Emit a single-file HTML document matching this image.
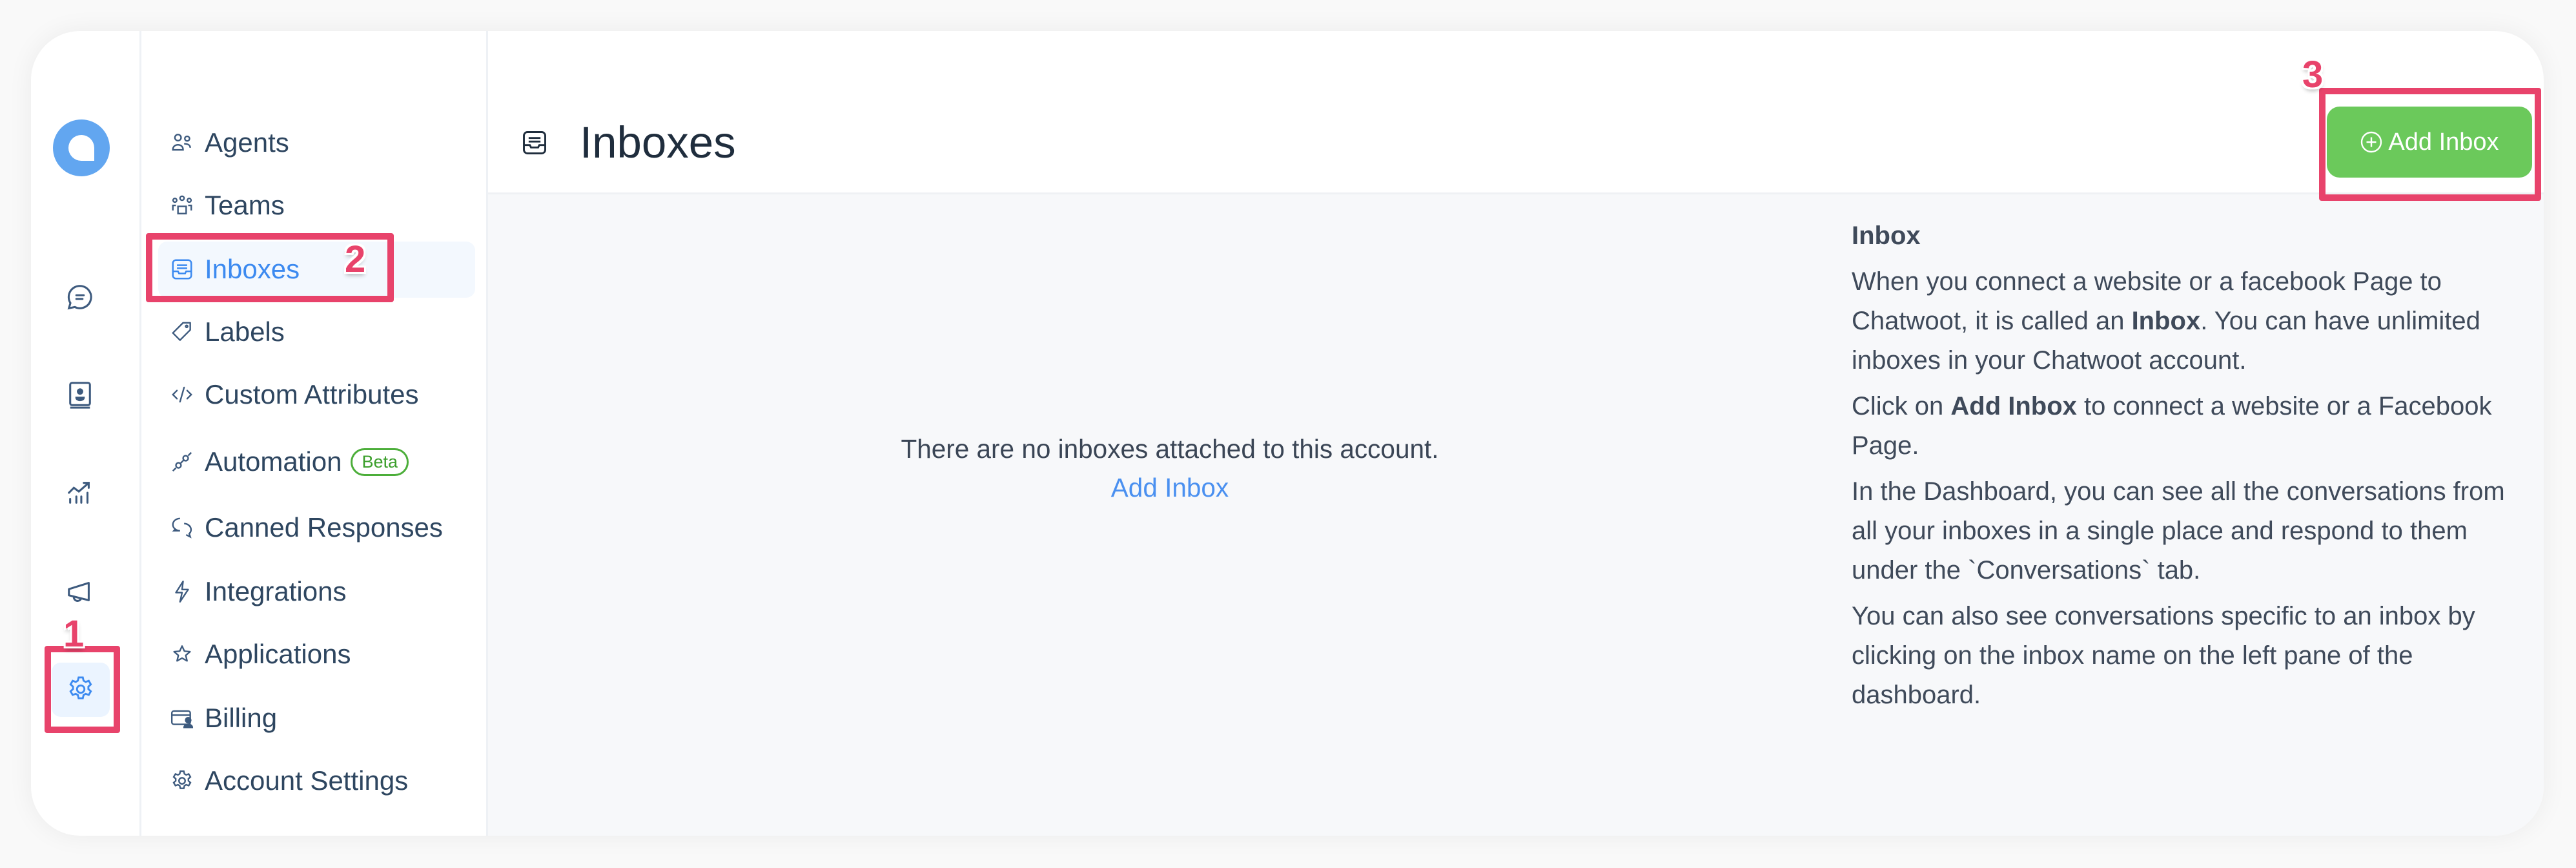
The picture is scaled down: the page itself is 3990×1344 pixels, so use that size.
<!DOCTYPE html>
<html><head><meta charset="utf-8"><style>
*{margin:0;padding:0;box-sizing:border-box}
body{width:3990px;height:1344px;background:#f9f9f9;font-family:"Liberation Sans",sans-serif;position:relative;overflow:hidden;color:#2e3e52}
.card{position:absolute;left:48px;top:48px;width:3892px;height:1246px;background:#fff;border-radius:76px;box-shadow:0 0 40px rgba(0,0,0,0.06);overflow:hidden}
.abs{position:absolute}
.nav{position:absolute;left:168px;top:0;width:540px;height:100%;border-left:3px solid #eef1f5;border-right:3px solid #eef1f5}
.item{position:absolute;left:44px;height:60px;display:flex;align-items:center;font-size:42px;color:#2e4660;white-space:nowrap}
.item svg{width:38px;height:38px;margin-right:16px;flex:none}
.main{position:absolute;left:708px;top:250px;right:0;bottom:0;background:#f7f8fa;border-top:3px solid #eff1f4}
.rbox{position:absolute;border:10px solid #e8436b;border-radius:4px}
.num{position:absolute;font-weight:bold;color:#e8436b;font-size:58px;text-shadow:0 0 4px #fff,3px 3px 0 #fff,-3px -3px 0 #fff,3px -3px 0 #fff,-3px 3px 0 #fff,0 5px 7px rgba(0,0,0,.3)}
.info{position:absolute;left:2820px;top:287px;font-size:40px;line-height:61px;color:#3f4a5a;white-space:nowrap}
.info p{margin-bottom:10px}
</style></head><body>
<div class="card">
  <svg class="abs" style="left:34px;top:137px" width="88" height="88" viewBox="0 0 88 88"><circle cx="44" cy="44" r="44" fill="#62a6f0"/><path d="M44 24a20 20 0 1 0 0 40h20V44A20 20 0 0 0 44 24z" fill="#fff"/></svg>
  <svg class="abs" style="left:53px;top:389px" width="46" height="46" viewBox="0 0 24 24" fill="none" stroke="#3d5a7e" stroke-width="1.6" stroke-linecap="round"><path d="M12 3a9 9 0 1 1-4.2 17L3 21l1.2-4.2A9 9 0 0 1 12 3z"/><path d="M9 10.5h6M9 13.5h5"/></svg>
  <svg class="abs" style="left:55px;top:541px" width="42" height="46" viewBox="0 0 22 24" fill="none" stroke="#3d5a7e" stroke-width="1.6"><rect x="3" y="2" width="16" height="18" rx="1.5"/><path d="M3 22h16"/><circle cx="11" cy="9" r="1.8" fill="#3d5a7e"/><path d="M8 14a3 2 0 0 0 6 0z" fill="#3d5a7e"/></svg>
  <svg class="abs" style="left:53px;top:692px" width="46" height="46" viewBox="0 0 24 24" fill="none" stroke="#3d5a7e" stroke-width="1.6" stroke-linecap="round"><path d="M3 12l4-4 4 3 8-7M15 4h4v4M4 20v-3M9 20v-5M13 20v-5M18 20v-8"/></svg>
  <svg class="abs" style="left:53px;top:845px" width="46" height="46" viewBox="0 0 24 24" fill="none" stroke="#3d5a7e" stroke-width="1.6" stroke-linejoin="round"><path d="M3 10l16-5v14L3 15z"/><path d="M7 16a3 3 0 0 0 6 1"/></svg>
  <div class="abs" style="left:32px;top:978px;width:90px;height:84px;background:#ebf4ff;border-radius:14px"></div>
  <svg class="abs" style="left:54px;top:996px" width="46" height="46" viewBox="0 0 24 24" fill="none" stroke="#3c8af0" stroke-width="1.5"><path d="M10.3 2.6h3.4l.6 2.6 1.7 1 2.5-.9 1.7 2.9-2 1.8v2l2 1.8-1.7 2.9-2.5-.9-1.7 1-.6 2.6h-3.4l-.6-2.6-1.7-1-2.5.9-1.7-2.9 2-1.8v-2l-2-1.8 1.7-2.9 2.5.9 1.7-1z"/><circle cx="12" cy="12" r="3"/></svg>
  <div class="rbox" style="left:21px;top:952px;width:117px;height:135px"></div>
  <div class="num" style="left:50px;top:900px">1</div>

  <div class="nav">
    <div class="abs" style="left:26px;top:326px;width:491px;height:87px;background:#f3f8fe;border-radius:14px"></div>
    <div class="item" style="top:143px"><svg viewBox="0 0 24 24" fill="none" stroke="#3d5a7e" stroke-width="1.5"><circle cx="8" cy="7" r="3"/><circle cx="17" cy="8" r="2.3"/><path d="M3 19c0-4 3-5 5-5s5 1 5 5zM14 13c3 0 6 1 6 4"/></svg>Agents</div>
    <div class="item" style="top:240px"><svg viewBox="0 0 24 24" fill="none" stroke="#3d5a7e" stroke-width="1.5"><circle cx="12" cy="5" r="2"/><circle cx="5" cy="7" r="1.8"/><circle cx="19" cy="7" r="1.8"/><path d="M8 20v-7h8v7zM3 17v-5h3M21 17v-5h-3"/></svg>Teams</div>
    <div class="item" style="top:339px;color:#3c8af0"><svg viewBox="0 0 24 24" fill="none" stroke="#3c8af0" stroke-width="1.6"><rect x="3" y="3" width="18" height="18" rx="3"/><path d="M7 8h10M7 11h10M3 14h5l1 2h6l1-2h5"/></svg>Inboxes</div>
    <div class="item" style="top:436px"><svg viewBox="0 0 24 24" fill="none" stroke="#3d5a7e" stroke-width="1.5" stroke-linejoin="round"><path d="M13 3h7v7l-10 10-7-7z"/><circle cx="16.5" cy="6.5" r="1"/></svg>Labels</div>
    <div class="item" style="top:533px"><svg viewBox="0 0 24 24" fill="none" stroke="#3d5a7e" stroke-width="1.5" stroke-linecap="round"><path d="M7 8l-4 4 4 4M17 8l4 4-4 4M14 5l-4 14"/></svg>Custom Attributes</div>
    <div class="item" style="top:637px"><svg viewBox="0 0 24 24" fill="none" stroke="#3d5a7e" stroke-width="1.5"><path d="M3 21l3-3M21 3l-3 3"/><circle cx="8.5" cy="15.5" r="2.5"/><circle cx="15.5" cy="8.5" r="2.5"/><path d="M10 14l4-4"/></svg>Automation<span style="margin-left:14px;font-size:27px;color:#3a9e2a;border:3px solid #4cae3a;border-radius:30px;padding:3px 14px">Beta</span></div>
    <div class="item" style="top:739px"><svg viewBox="0 0 24 24" fill="none" stroke="#3d5a7e" stroke-width="1.5"><path d="M10 3a7 6 0 1 0 0 12H4l2-2M14 8a7 6 0 0 1 5 10l1 3-4-2"/></svg>Canned Responses</div>
    <div class="item" style="top:838px"><svg viewBox="0 0 24 24" fill="none" stroke="#3d5a7e" stroke-width="1.5" stroke-linejoin="round"><path d="M13 2L6 13h6l-2 9 8-12h-6z"/></svg>Integrations</div>
    <div class="item" style="top:935px"><svg viewBox="0 0 24 24" fill="none" stroke="#3d5a7e" stroke-width="1.5" stroke-linejoin="round"><path d="M12 4l2.3 5 5.5.5-4.2 3.6 1.3 5.4L12 15.8 7.1 18.5l1.3-5.4-4.2-3.6 5.5-.5z"/></svg>Applications</div>
    <div class="item" style="top:1034px"><svg viewBox="0 0 24 24" fill="none" stroke="#3d5a7e" stroke-width="1.5"><rect x="2" y="5" width="18" height="13" rx="2"/><path d="M2 9h18"/><circle cx="18" cy="14" r="2.5" fill="#3d5a7e"/><path d="M14 21a4 3 0 0 1 8 0z" fill="#3d5a7e"/></svg>Billing</div>
    <div class="item" style="top:1131px"><svg viewBox="0 0 24 24" fill="none" stroke="#3d5a7e" stroke-width="1.5"><path d="M10.3 2.6h3.4l.6 2.6 1.7 1 2.5-.9 1.7 2.9-2 1.8v2l2 1.8-1.7 2.9-2.5-.9-1.7 1-.6 2.6h-3.4l-.6-2.6-1.7-1-2.5.9-1.7-2.9 2-1.8v-2l-2-1.8 1.7-2.9 2.5.9 1.7-1z"/><circle cx="12" cy="12" r="3"/></svg>Account Settings</div>
  </div>
  <div class="rbox" style="left:178px;top:313px;width:384px;height:107px"></div>
  <div class="num" style="left:486px;top:320px">2</div>

  <svg class="abs" style="left:758px;top:151px" width="44" height="44" viewBox="0 0 24 24" fill="none" stroke="#1f2d3d" stroke-width="1.6"><rect x="3" y="3" width="18" height="18" rx="3"/><path d="M7 8h10M7 11h10M3 14h5l1 2h6l1-2h5"/></svg>
  <div class="abs" style="left:850px;top:131px;font-size:69px;color:#1f2d3d;line-height:84px">Inboxes</div>

  <div class="main"></div>
  <div class="abs" style="left:3556px;top:117px;width:318px;height:110px;background:#6bc95b;border-radius:20px;color:#fff;font-size:38px;display:flex;align-items:center;justify-content:center"><svg width="36" height="36" viewBox="0 0 24 24" fill="none" stroke="#fff" stroke-width="1.6" style="margin-right:8px"><circle cx="12" cy="12" r="10"/><path d="M12 7v10M7 12h10"/></svg>Add Inbox</div>
  <div class="rbox" style="left:3544px;top:88px;width:344px;height:175px"></div>
  <div class="num" style="left:3518px;top:34px">3</div>

  <div class="abs" style="left:708px;top:617px;width:2112px;text-align:center;font-size:40.5px;line-height:60px;color:#3a4555">There are no inboxes attached to this account.<br><span style="color:#4a90f0">Add Inbox</span></div>

  <div class="info">
    <p style="font-weight:bold;margin-bottom:10px">Inbox</p>
    <p>When you connect a website or a facebook Page to<br>Chatwoot, it is called an <b>Inbox</b>. You can have unlimited<br>inboxes in your Chatwoot account.</p>
    <p>Click on <b>Add Inbox</b> to connect a website or a Facebook<br>Page.</p>
    <p>In the Dashboard, you can see all the conversations from<br>all your inboxes in a single place and respond to them<br>under the `Conversations` tab.</p>
    <p>You can also see conversations specific to an inbox by<br>clicking on the inbox name on the left pane of the<br>dashboard.</p>
  </div>
</div>
</body></html>
